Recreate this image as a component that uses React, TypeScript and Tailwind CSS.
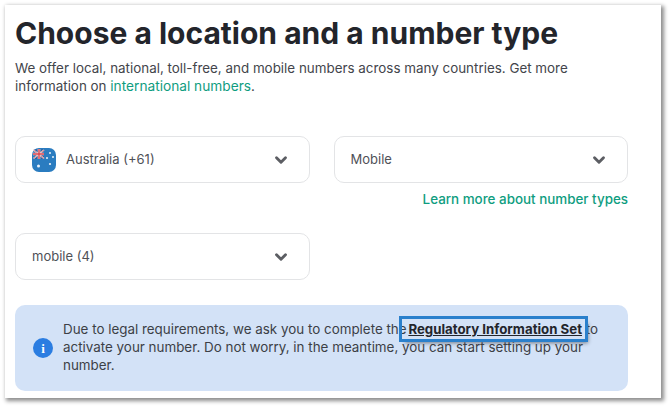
import { ChevronDown } from 'lucide-react';

function AustraliaFlag() {
  return (
    <svg width="24" height="24" viewBox="0 0 24 24" className="shrink-0">
      <rect width="24" height="24" rx="7" fill="#2a7cc0" />
      <path d="M2 1.5h10v9.5H2z" fill="#2f5f9e" />
      <path d="M1.5 2 12 10.5M12 2 1.5 10.5" stroke="#f3e6e6" strokeWidth="1.6" />
      <path d="M1.5 2 12 10.5M12 2 1.5 10.5" stroke="#d9434e" strokeWidth="0.6" />
      <path d="M7 1v10M1 6h11" stroke="#f3e6e6" strokeWidth="2.6" />
      <path d="M7 1v10M1 6h11" stroke="#d9434e" strokeWidth="1.4" />
      <circle cx="6.5" cy="18" r="1.5" fill="#eaf2fa" />
      <circle cx="18" cy="5" r="1" fill="#eaf2fa" />
      <circle cx="15" cy="10" r="1" fill="#eaf2fa" />
      <circle cx="21" cy="9" r="1" fill="#eaf2fa" />
      <circle cx="18" cy="16" r="1.1" fill="#eaf2fa" />
    </svg>
  );
}

function Select({ label, flag }: { label: string; flag?: boolean }) {
  return (
    <div className="h-[47px] flex items-center justify-between rounded-[10px] border border-[#e3e4e6] bg-white pl-4 pr-[19px]">
      <div className="flex items-center gap-[10px] text-[13px] text-[#4f5157]">
        {flag && <AustraliaFlag />}
        <span>{label}</span>
      </div>
      <ChevronDown size={18} strokeWidth={3.8} className="text-[#5c5e63]" />
    </div>
  );
}

export default function App() {
  return (
    <div className="w-[670px] h-[407px] overflow-hidden bg-white pt-[5px] pl-[5px] font-['Inter',sans-serif]">
      <div className="w-[656px] h-[393px] bg-white px-[10px] pt-[9px] shadow-[2px_2px_4px_1px_rgba(0,0,0,0.45)]">
        <h1 className="text-[30px] leading-[38px] font-bold text-[#23252b]">
          Choose a location and a number type
        </h1>
        <p className="mt-[7px] w-[610px] text-[13.4px] leading-[18px] text-[#43454b]">
          We offer local, national, toll-free, and mobile numbers across many countries. Get more
          information on <span className="text-[13.7px] text-[#0f9d7f]">international numbers</span>.
        </p>

        <div className="mt-[41px] grid grid-cols-2 gap-x-6 w-[613px]">
          <Select label="Australia (+61)" flag />
          <div>
            <Select label="Mobile" />
            <div className="mt-[7px] text-right text-[13.4px] leading-[18px] font-medium text-[#0f9d7f]">
              Learn more about number types
            </div>
          </div>
        </div>

        <div className="mt-[25px] w-[294.5px]">
          <Select label="mobile (4)" />
        </div>

        <div className="mt-[25px] w-[613px] h-[86px] flex items-center gap-[10px] rounded-[10px] bg-[#d3e2f7] pl-[18px] pr-[20px]">
          <div className="w-5 h-5 shrink-0 rounded-full bg-[#2b7de1] flex items-center justify-center text-white text-[13px] leading-none font-bold font-['Liberation_Serif',serif]">
            i
          </div>
          <p className="pb-[2px] text-[13.4px] leading-[18px] text-[#3c3f46]">
            Due to legal requirements, we ask you to complete the{' '}
            <span className="font-bold text-[13.25px] underline text-[#23252b] outline-[3px] outline-[#2a80cc] shadow-[3px_4px_4px_rgba(0,0,0,0.45)] pl-[6px] pr-[3px] py-[2px] -ml-[8px] -mr-[3px]">
              Regulatory Information Set
            </span>{' '}
            to activate your number. Do not worry, in the meantime, you can start setting up your
            number.
          </p>
        </div>
      </div>
    </div>
  );
}
